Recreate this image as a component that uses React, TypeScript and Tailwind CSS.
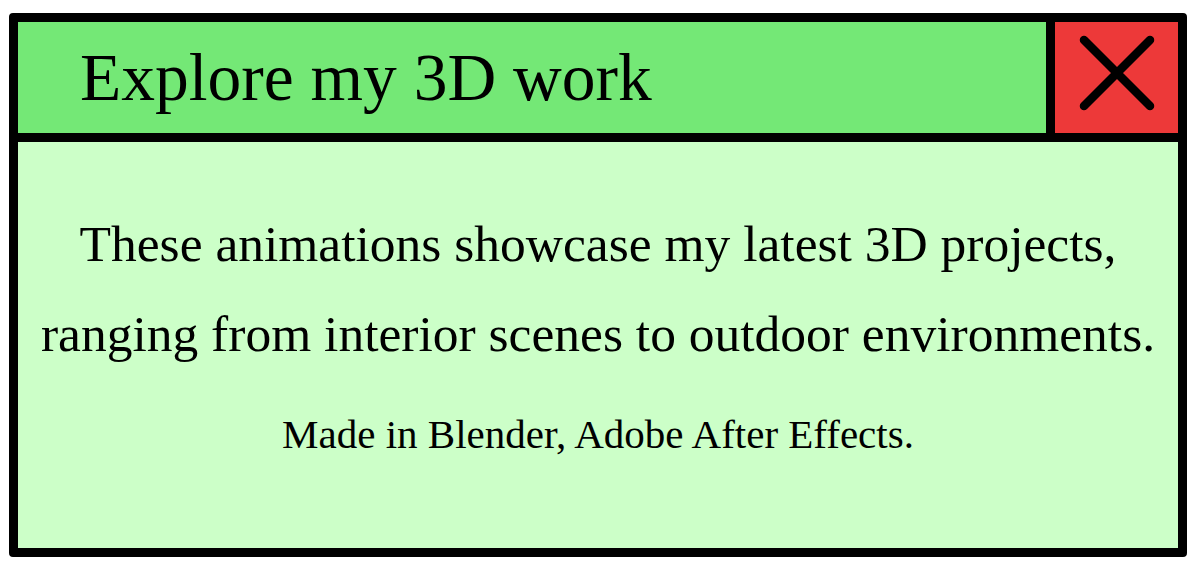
import React from 'react';

const serif = { fontFamily: '"Liberation Serif", "Times New Roman", serif' };

export default function App() {
  return (
    <div className="w-[1191px] h-[573px] bg-white pt-[13px] pl-[9px] pr-[4px] pb-[16px]" style={serif}>
      {/* Window frame */}
      <div className="h-full flex flex-col border-[9px] border-black rounded-[4px] bg-[#ccffc8] overflow-hidden">
        {/* Title bar */}
        <div className="flex h-[120px] border-b-[9px] border-black">
          <div className="flex-1 flex items-center pl-[62px] bg-[#74e876]">
            <h1 className="text-[67.5px] leading-none text-black whitespace-nowrap">Explore my 3D work</h1>
          </div>
          <button className="w-[132px] border-l-[9px] border-black bg-[#ed3939] flex items-center justify-center pb-[10px]">
            <svg width="80" height="80" viewBox="0 0 80 80" fill="none">
              <path d="M7 7 L73 73 M73 7 L7 73" stroke="black" strokeWidth="8.5" strokeLinecap="round" />
            </svg>
          </button>
        </div>

        {/* Body */}
        <div className="flex-1 flex flex-col items-center pt-[57px] text-black">
          <p className="text-[51.5px] leading-[90px] text-center whitespace-nowrap">
            These animations showcase my latest 3D projects,
            <br />
            ranging from interior scenes to outdoor environments.
          </p>
          <p className="mt-[31px] text-[41px] leading-[48px] text-center whitespace-nowrap">
            Made in Blender, Adobe After Effects.
          </p>
        </div>
      </div>
    </div>
  );
}
